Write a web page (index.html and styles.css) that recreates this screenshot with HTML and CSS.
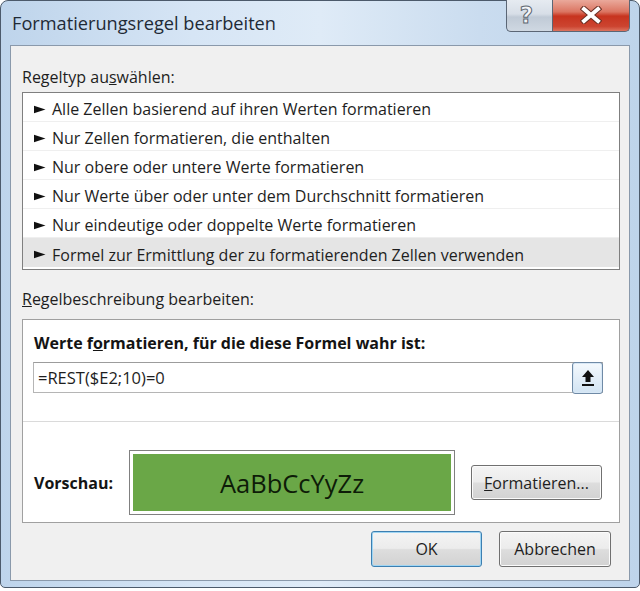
FILE: index.html
```html
<!DOCTYPE html>
<html lang="de">
<head>
<meta charset="utf-8">
<title>Formatierungsregel bearbeiten</title>
<link rel="stylesheet" href="styles.css">
</head>
<body>
<div class="window">
  <div class="titlebar">
    <div class="title">Formatierungsregel bearbeiten</div>
    <div class="caption-buttons">
      <div class="cap-btn help"><span class="qmark">?</span></div>
      <div class="cap-btn close">
        <svg width="22" height="18" viewBox="0 0 22 18">
          <path d="M4 3 L18 15 M18 3 L4 15" stroke="#6a2f24" stroke-width="6" stroke-linecap="square" fill="none"/>
          <path d="M4 3 L18 15 M18 3 L4 15" stroke="#ffffff" stroke-width="4" stroke-linecap="square" fill="none"/>
        </svg>
      </div>
    </div>
  </div>
  <div class="client">
    <div class="label label-first">Regeltyp au<u>s</u>wählen:</div>
    <div class="listbox">
      <div class="row"><svg class="arrow" width="12" height="9" viewBox="0 0 12 9"><path d="M0 0.8 L11.5 4.5 L0 8.2 Z" fill="#111"/></svg>Alle Zellen basierend auf ihren Werten formatieren</div>
      <div class="row"><svg class="arrow" width="12" height="9" viewBox="0 0 12 9"><path d="M0 0.8 L11.5 4.5 L0 8.2 Z" fill="#111"/></svg>Nur Zellen formatieren, die enthalten</div>
      <div class="row"><svg class="arrow" width="12" height="9" viewBox="0 0 12 9"><path d="M0 0.8 L11.5 4.5 L0 8.2 Z" fill="#111"/></svg>Nur obere oder untere Werte formatieren</div>
      <div class="row"><svg class="arrow" width="12" height="9" viewBox="0 0 12 9"><path d="M0 0.8 L11.5 4.5 L0 8.2 Z" fill="#111"/></svg>Nur Werte über oder unter dem Durchschnitt formatieren</div>
      <div class="row"><svg class="arrow" width="12" height="9" viewBox="0 0 12 9"><path d="M0 0.8 L11.5 4.5 L0 8.2 Z" fill="#111"/></svg>Nur eindeutige oder doppelte Werte formatieren</div>
      <div class="row selected"><svg class="arrow" width="12" height="9" viewBox="0 0 12 9"><path d="M0 0.8 L11.5 4.5 L0 8.2 Z" fill="#111"/></svg>Formel zur Ermittlung der zu formatierenden Zellen verwenden</div>
    </div>
    <div class="label label-second"><u>R</u>egelbeschreibung bearbeiten:</div>
    <div class="descbox">
      <div class="desc-top">
        <div class="bold">Werte f<u>o</u>rmatieren, für die diese Formel wahr ist:</div>
        <div class="formula">
          <span class="formula-text">=REST($E2;10)=0</span>
          <div class="collapse-btn">
            <svg width="14" height="18" viewBox="0 0 14 18">
              <path d="M7 1 L13 8 L9.5 8 L9.5 13 L4.5 13 L4.5 8 L1 8 Z" fill="#111"/>
              <rect x="1" y="15" width="12" height="2" fill="#111"/>
            </svg>
          </div>
        </div>
      </div>
      <div class="desc-bottom">
        <div class="bold preview-label">Vorschau:</div>
        <div class="preview"><div class="preview-inner">AaBbCcYyZz</div></div>
        <div class="button fmt-btn"><u>F</u>ormatieren...</div>
      </div>
    </div>
    <div class="footer">
      <div class="button ok-btn">OK</div>
      <div class="button cancel-btn">Abbrechen</div>
    </div>
  </div>
</div>
</body>
</html>
```
FILE: styles.css
```css
html, body {
  margin: 0;
  padding: 0;
  background: #ffffff;
}
body {
  width: 640px;
  height: 591px;
  overflow: hidden;
  font-family: "Open Sans", "Noto Sans", "DejaVu Sans", sans-serif;
  color: #1e1e1e;
}
.window {
  box-sizing: border-box;
  width: 640px;
  height: 588px;
  border: 1px solid #4c5a6b;
  border-radius: 8px 8px 5px 5px;
  background: linear-gradient(to right, #bed4eb 0%, #d6e5f5 30%, #dfebf7 50%, #cadcef 75%, #bed4eb 100%);
  display: flex;
  flex-direction: column;
}
.titlebar {
  height: 44px;
  display: flex;
  justify-content: space-between;
  flex: none;
}
.title {
  padding-left: 11px;
  line-height: 44px;
  font-size: 18.2px;
  color: #1f2a36;
}
.caption-buttons {
  display: flex;
  margin-top: -1px;
  margin-right: 9px;
  align-self: flex-start;
}
.cap-btn {
  height: 32px;
  box-sizing: border-box;
  display: flex;
  align-items: center;
  justify-content: center;
  border: 1px solid #5b6675;
  border-top: none;
}
.help {
  width: 46px;
  padding-right: 6px;
  border-radius: 0 0 0 5px;
  border-right: none;
  background: linear-gradient(to bottom, #e6ebf1 0%, #d7dee7 45%, #c0cad6 55%, #cfd8e2 100%);
}
.qmark {
  font-family: "DejaVu Sans", sans-serif;
  font-weight: bold;
  font-size: 23px;
  line-height: 23px;
  color: #f3f5f8;
  -webkit-text-stroke: 1px #5d6670;
}
.close {
  width: 78px;
  padding-bottom: 2px;
  border-radius: 0 0 5px 0;
  background: linear-gradient(to bottom, #eaa99b 0%, #db7562 38%, #c7341f 52%, #cc4430 85%, #dc735e 100%);
}
.client {
  flex: 1;
  margin: 0 9px 6px 9px;
  border: 1px solid #8a99ab;
  background: #f0f0f0;
  padding: 0 9px 0 11px;
  display: flex;
  flex-direction: column;
}
.label {
  font-size: 16px;
  line-height: 20px;
}
.label-first {
  margin-top: 21px;
}
.listbox {
  margin-top: 5px;
  height: 178px;
  box-sizing: border-box;
  border: 1px solid #7f7f7f;
  background: #ffffff;
}
.row {
  height: 29px;
  box-sizing: border-box;
  display: flex;
  align-items: center;
  padding-left: 11px;
  padding-top: 4px;
  font-size: 16px;
  border-bottom: 1px solid #efefef;
  white-space: nowrap;
}
.row.selected {
  background: #e5e5e5;
  border-bottom: none;
}
.arrow {
  flex: none;
  margin-right: 6px;
}
.label-second {
  margin-top: 19px;
}
.descbox {
  margin-top: 10px;
  height: 204px;
  box-sizing: border-box;
  border: 1px solid #a0a0a0;
  background: #ffffff;
  display: flex;
  flex-direction: column;
}
.desc-top {
  height: 102px;
  box-sizing: border-box;
  border-bottom: 1px solid #dadada;
  padding: 13px 16px 0 10px;
}
.bold {
  font-weight: bold;
  font-size: 16px;
  line-height: 20px;
  padding-left: 1px;
  color: #141414;
}
.formula {
  margin-top: 9px;
  height: 31px;
  box-sizing: border-box;
  border: 1px solid #b5b5b5;
  border-top-color: #9c9c9c;
  display: flex;
  align-items: center;
  justify-content: space-between;
}
.formula-text {
  padding-left: 4px;
  font-size: 16.5px;
}
.collapse-btn {
  width: 31px;
  height: 32px;
  margin-right: -1px;
  margin-top: 1px;
  box-sizing: border-box;
  border: 1px solid #6f8aa6;
  border-radius: 3px;
  background: linear-gradient(to bottom, #f4f9fd 0%, #e3eef8 50%, #d2e4f3 100%);
  box-shadow: inset 0 0 0 1px #d8e8f6;
  display: flex;
  align-items: center;
  justify-content: center;
}
.desc-bottom {
  flex: 1;
  display: flex;
  align-items: center;
  padding: 28px 16px 7px 10px;
}
.preview-label {
  width: 95px;
}
.preview {
  width: 326px;
  height: 65px;
  box-sizing: border-box;
  border: 1px solid #808080;
  padding: 3px;
  background: #ffffff;
}
.preview-inner {
  height: 100%;
  background: #6aa747;
  display: flex;
  align-items: center;
  justify-content: center;
  font-size: 25.5px;
  font-weight: 500;
  color: #0e1c08;
}
.button {
  box-sizing: border-box;
  height: 36px;
  border: 1px solid #707070;
  border-radius: 3px;
  background: linear-gradient(to bottom, #f4f4f4 0%, #ececec 48%, #dddddd 52%, #d2d2d2 100%);
  box-shadow: inset 0 0 0 1px #fbfbfb;
  display: flex;
  align-items: center;
  justify-content: center;
  font-size: 16px;
  color: #1e1e1e;
}
.fmt-btn {
  width: 131px;
  height: 35px;
  margin-left: 16px;
}
.footer {
  margin-top: 8px;
  display: flex;
  justify-content: flex-end;
  gap: 17px;
  padding-right: 9px;
}
.ok-btn {
  width: 111px;
  border-color: #3c7fb1;
  box-shadow: inset 0 0 0 1px #9fd5f3;
}
.cancel-btn {
  width: 112px;
}
```
